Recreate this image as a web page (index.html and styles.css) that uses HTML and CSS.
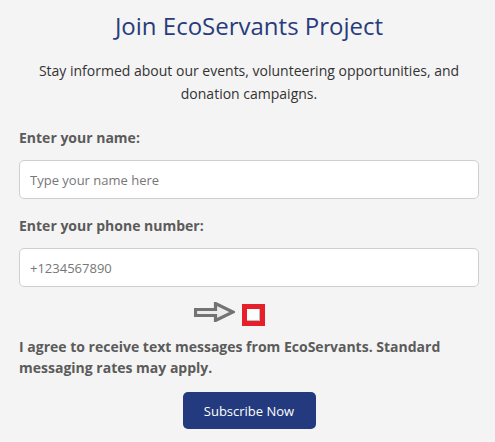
FILE: index.html
```html
<!DOCTYPE html>
<html lang="en">
<head>
<meta charset="utf-8">
<title>Join EcoServants Project</title>
<link rel="stylesheet" href="styles.css">
</head>
<body>
<main class="signup">
  <h1 class="title">Join EcoServants Project</h1>
  <p class="intro">Stay informed about our events, volunteering opportunities, and donation campaigns.</p>
  <form class="form">
    <label class="label" for="name">Enter your name:</label>
    <input class="field" id="name" type="text" placeholder="Type your name here">
    <label class="label" for="phone">Enter your phone number:</label>
    <input class="field" id="phone" type="tel" placeholder="+1234567890">
    <div class="consent-row">
      <span class="check">
        <svg class="arrow" width="41" height="20" viewBox="0 0 41 20" aria-hidden="true">
          <path d="M1.5 7.5 H21.5 V1.5 L39 10 L21.5 18.5 V13.5 H1.5 Z" fill="#ececec" stroke="#737373" stroke-width="3.2" stroke-linejoin="miter"/>
        </svg>
        <span class="check-box"></span>
      </span>
    </div>
    <p class="consent">I agree to receive text messages from EcoServants. Standard messaging rates may apply.</p>
    <div class="actions">
      <button class="submit" type="button">Subscribe Now</button>
    </div>
  </form>
</main>
</body>
</html>
```
FILE: styles.css
```css
html, body {
  margin: 0;
  padding: 0;
  background: #f4f4f4;
}
body {
  font-family: "Open Sans", "Noto Sans", sans-serif;
  color: #333;
}
.signup {
  padding: 0 16px 0 19px;
}
.title {
  margin: 0;
  padding-top: 9px;
  text-align: center;
  font-size: 24px;
  font-weight: 400;
  line-height: 33px;
  color: #283c7c;
}
.intro {
  margin: 17px 0 0;
  text-align: center;
  font-size: 14px;
  line-height: 23px;
  color: #333;
}
.form {
  display: flex;
  flex-direction: column;
  margin-top: 23px;
}
.label {
  font-size: 14px;
  font-weight: 700;
  line-height: 20px;
  color: #5b5b5b;
}
.field {
  box-sizing: border-box;
  height: 39px;
  margin: 12px 0 17px;
  padding: 0 10px;
  border: 1px solid #cfcfcf;
  border-radius: 5px;
  background: #fff;
  font-family: inherit;
  font-size: 13px;
  color: #333;
}
.field::placeholder {
  color: #777;
}
.consent-row {
  display: flex;
  justify-content: center;
  padding-left: 9px;
}
.check {
  position: relative;
  box-sizing: border-box;
  width: 23px;
  height: 22px;
  border: 5px solid #e6202a;
  background: #fff;
}
.arrow {
  position: absolute;
  top: -7px;
  right: calc(100% + 12px);
  display: block;
}
.check-box {
  display: block;
  box-sizing: border-box;
  width: 13px;
  height: 12px;
  background: #fdfdfd;
  border-right: 1px solid #bdbdbd;
  border-bottom: 1px solid #bdbdbd;
}
.consent {
  margin: 10px 0 0;
  font-size: 14px;
  font-weight: 700;
  line-height: 21px;
  color: #5b5b5b;
}
.actions {
  display: flex;
  justify-content: center;
  margin-top: 14px;
}
.submit {
  width: 133px;
  height: 37px;
  border: 0;
  border-radius: 5px;
  background: #233a7e;
  color: #fff;
  font-family: inherit;
  font-size: 13px;
}
```
